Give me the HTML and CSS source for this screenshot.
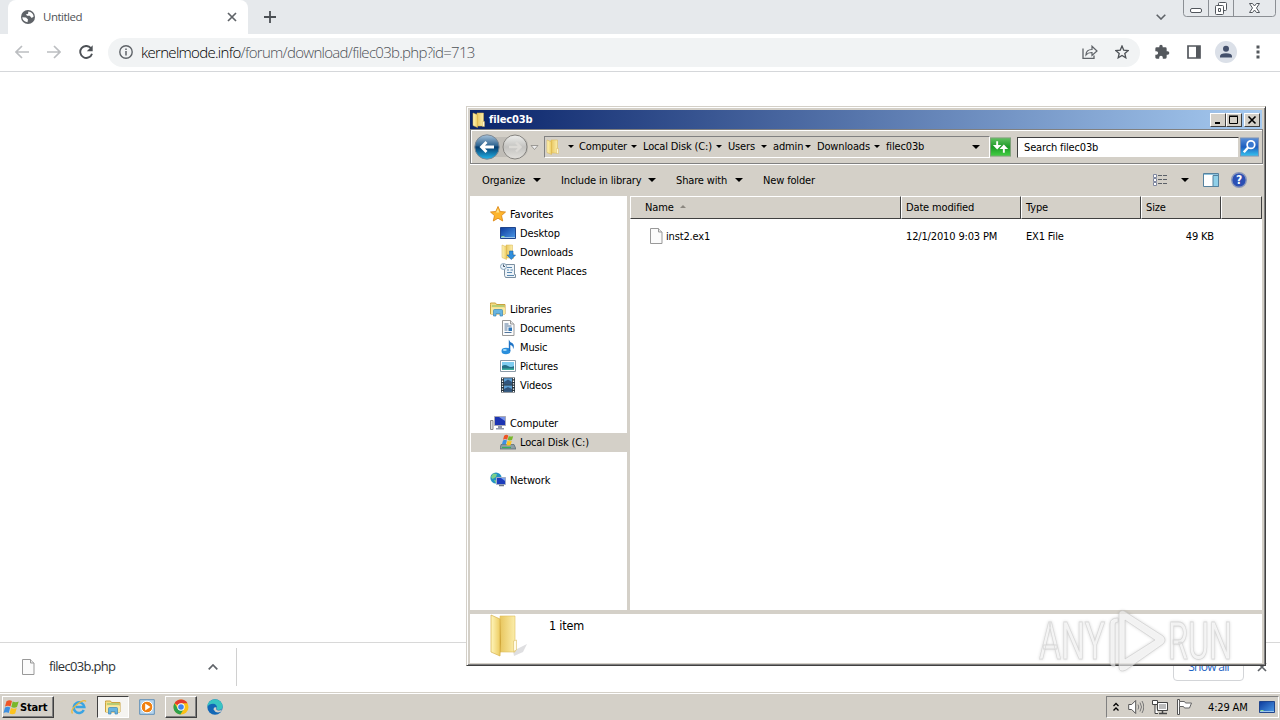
FILE: index.html
```html
<!DOCTYPE html>
<html lang="en">
<head>
  <meta charset="UTF-8">
  <title>Untitled</title>
  <link rel="stylesheet" href="styles.css">
</head>
<body>
  <svg class="defs" width="0" height="0">
    <defs>
      <linearGradient id="gold" x1="0" x2="1"><stop offset="0" stop-color="#fff6bc"/><stop offset="1" stop-color="#edcc62"/></linearGradient>
      <linearGradient id="gold2" x1="0" x2="1"><stop offset="0" stop-color="#e8c65e"/><stop offset="1" stop-color="#fbedaa"/></linearGradient>
      <linearGradient id="blue" x1="0" x2="1" y2="1"><stop offset="0" stop-color="#0c3a9c"/><stop offset="1" stop-color="#4d9be8"/></linearGradient>
      <linearGradient id="orb" x1="0" x2="0" y2="1"><stop offset="0" stop-color="#a9c4dc"/><stop offset=".45" stop-color="#2c628f"/><stop offset=".5" stop-color="#053b6d"/><stop offset="1" stop-color="#23b5ea"/></linearGradient>
      <linearGradient id="orbGray" x1="0" x2="0" y2="1"><stop offset="0" stop-color="#eeeeec"/><stop offset=".5" stop-color="#c4c3c0"/><stop offset="1" stop-color="#e2e0dc"/></linearGradient>
      <linearGradient id="green" x1="0" x2="0" y2="1"><stop offset="0" stop-color="#62c262"/><stop offset=".5" stop-color="#1d9a27"/><stop offset="1" stop-color="#43d043"/></linearGradient>
      <linearGradient id="look" x1="0" x2="0" y2="1"><stop offset="0" stop-color="#5a8fd8"/><stop offset=".5" stop-color="#1e5fc0"/><stop offset="1" stop-color="#35c5f0"/></linearGradient>
      <symbol id="folder" viewBox="0 0 16 16">
        <path d="M6 1h6.500v13H6z" fill="url(#gold2)" stroke="#d9b54e" stroke-width=".5"/>
        <path d="M2 1l4.500 1.800V15.500L2 13.500z" fill="url(#gold)" stroke="#d8b049" stroke-width=".5"/>
        <path d="M11.500 9.500h2v5h-2z" fill="#fff7d2" stroke="#d8b049" stroke-width=".4"/>
      </symbol>
      <symbol id="library" viewBox="0 0 16 16">
        <path d="M.5 3.500V2h5l1 1.500h8.500V13H.5z" fill="#f4dc82" stroke="#c9a23f"/>
        <path d="M2 5h12" stroke="#7bbd6a"/><path d="M1 6.500h14V13H1z" fill="#fae9a0"/>
        <path d="M3.500 15V9.500q0-1 1-1h7q1 0 1 1V15h-2.500v-2.500h-4V15z" fill="#67b4e0" stroke="#3b86b8" stroke-width=".7"/>
      </symbol>
      <symbol id="flag" viewBox="0 0 16 16">
        <path d="M3.500 2.200q3-2 5.500-.2L7.500 7.500q-2.500-1.500-5.500 0z" fill="#ee5526"/>
        <path d="M9.700 2.500q3 1.500 6 0L14 8q-3 1.300-5.700 0z" fill="#79b72b"/>
        <path d="M2 8.500q3-1.500 5.200 0l-1.500 5.500q-2.500-1.500-5.200 0z" fill="#3d8fe0"/>
        <path d="M8 9q3 1.500 5.700 0l-1.500 5.500q-2.700 1.500-5.700 0z" fill="#fcc31e"/>
      </symbol>
      <symbol id="desk" viewBox="0 0 16 16">
        <path d="M.5 2.500h15v11H.5z" fill="url(#blue)" stroke="#20458c"/><path d="M1 12.500h14" stroke="#9dc7ed"/><path d="M1.500 11.500h3" stroke="#8cdc8c"/>
      </symbol>
      <symbol id="page" viewBox="0 0 16 16">
        <path d="M2.500.5h8l3.500 3.500v11.500H2.500z" fill="#fbfbfb" stroke="#999"/><path d="M10.500.5V4H14" fill="#e7e7e7" stroke="#999"/>
      </symbol>
    </defs>
  </svg>

  <div class="browser">
    <div class="tabstrip">
      <div class="tab">
        <svg class="globe" viewBox="0 0 16 16"><circle cx="8" cy="8" r="7" fill="#5f6368"/><path d="M2.300 8.200l3.700.3 2 2-.5 2.800-1.700-.5Q2.500 11.500 2.300 8.200zM8.300 2.400q4.500.6 5.400 5l-2 1.500-2-2.200-2.500.1-1.400-1.400 2.300-.7z" fill="#fff"/></svg>
        <span class="tab-title">Untitled</span>
        <svg class="tab-close" viewBox="0 0 10 10"><path d="M1 1l8 8M9 1l-8 8" stroke="#5f6368" stroke-width="1.700"/></svg>
      </div>
      <svg class="tab-new" viewBox="0 0 12 12"><path d="M6 0v12M0 6h12" stroke="#4b4f54" stroke-width="1.800"/></svg>
      <svg class="tab-search" viewBox="0 0 10 6"><path d="M.7.7L5 5 9.300.7" fill="none" stroke="#5f6368" stroke-width="1.600"/></svg>
      <svg class="caption" viewBox="0 0 94 17">
        <path d="M.5 0v13.500q0 3 3 3h86q3 0 3-3V0M25.500 0v16M50.500 0v16" fill="none" stroke="#8b8f94"/>
        <g fill="#fff" stroke="#51565c"><rect x="7.500" y="8.500" width="11" height="4" rx="1.500"/><rect x="35.500" y="2.500" width="8" height="8" rx="1"/><rect x="32.500" y="5.500" width="8" height="9" rx="1"/><path d="M35.500 8.500h2v3h-2z"/></g>
        <path d="M66.500 3.500h3l2 2.500 2-2.500h3L73.500 8l3 4.500h-3l-2-2.500-2 2.500h-3l3-4.500z" fill="#fff" stroke="#51565c"/>
      </svg>
    </div>
    <div class="toolbar">
      <svg class="tool back" viewBox="0 0 14 14"><path d="M14 7H1.500M7 1L1 7l6 6" fill="none" stroke="#bcbec1" stroke-width="1.700"/></svg>
      <svg class="tool forward" viewBox="0 0 14 14"><path d="M0 7h12.500M7 1l6 6-6 6" fill="none" stroke="#bcbec1" stroke-width="1.700"/></svg>
      <svg class="tool reload" viewBox="0 0 14 14"><path d="M11.800 3A6 6 0 1 0 13 8.700" fill="none" stroke="#4d5156" stroke-width="1.900"/><path d="M13.700.3v6H7.800z" fill="#4d5156"/></svg>
      <div class="omnibox">
        <svg class="info" viewBox="0 0 14 14"><circle cx="7" cy="7" r="6.200" fill="none" stroke="#5f6368" stroke-width="1.400"/><path d="M7 6v4.500M7 3.400V5" stroke="#5f6368" stroke-width="1.500"/></svg>
        <span class="url"><b>kernelmode.info</b>/forum/download/filec03b.php?id=713</span>
        <svg class="share" viewBox="0 0 16 14"><path d="M1 3.500v10h11v-3" fill="none" stroke="#5f6368" stroke-width="1.300"/><path d="M4 10q0-5.500 6-5.500V1.200L15 6l-5 4.500V7.500Q6 7.300 4 10z" fill="none" stroke="#5f6368" stroke-width="1.200"/></svg>
        <svg class="star" viewBox="0 0 14 14"><path d="M7 1l1.700 4.100 4.500.4-3.400 2.900 1 4.400L7 10.500l-3.800 2.300 1-4.400L.8 5.500l4.500-.4z" fill="none" stroke="#4d5156" stroke-width="1.300"/></svg>
      </div>
      <svg class="puzzle" viewBox="0 0 24 24"><path d="M20.500 11H19V7a2 2 0 0 0-2-2h-4V3.500a2.500 2.500 0 0 0-5 0V5H4a2 2 0 0 0-2 2v3.800h1.500a2.700 2.700 0 0 1 0 5.400H2V20c0 1.100.9 2 2 2h3.800v-1.500a2.700 2.700 0 0 1 5.400 0V22H17a2 2 0 0 0 2-2v-4h1.500a2.500 2.500 0 0 0 0-5z" fill="#54585d"/></svg>
      <svg class="panel" viewBox="0 0 14 14"><path d="M1 1h12v12H1z" fill="#fff" stroke="#54585d" stroke-width="1.700"/><path d="M9 1h4v12H9z" fill="#54585d"/></svg>
      <svg class="avatar" viewBox="0 0 22 22"><circle cx="11" cy="11" r="11" fill="#dbe0e8"/><circle cx="11" cy="7.700" r="3" fill="#44506b"/><path d="M5 16.500v-1.300q0-3 6-3t6 3v1.300z" fill="#44506b"/></svg>
      <svg class="more" viewBox="0 0 4 14"><path d="M.5.500h3v3h-3zM.5 5.500h3v3h-3zM.5 10.500h3v3h-3z" fill="#54585d"/></svg>
    </div>
    <div class="page"></div>
    <div class="shelf">
      <div class="download">
        <svg viewBox="0 0 16 16"><use href="#page"/></svg>
        <span>filec03b.php</span>
        <svg class="chev" viewBox="0 0 10 6"><path d="M.7 5.300L5 1l4.300 4.300" fill="none" stroke="#5f6368" stroke-width="1.700"/></svg>
      </div>
      <div class="show-all">Show all</div>
      <svg class="shelf-close" viewBox="0 0 10 10"><path d="M1 1l8 8M9 1l-8 8" stroke="#5f6368" stroke-width="1.700"/></svg>
    </div>
  </div>

  <div class="window">
    <div class="titlebar">
      <svg class="ico" viewBox="0 0 16 16"><use href="#folder"/></svg>
      <span class="title">filec03b</span>
      <div class="btns">
        <i><svg viewBox="0 0 12 10"><path d="M3 8h5" stroke="#000" stroke-width="2"/></svg></i>
        <i><svg viewBox="0 0 12 10"><path d="M1.500 1.500h8v7h-8zM1 1h9" fill="none" stroke="#000"/></svg></i>
        <i class="x"><svg viewBox="0 0 12 10"><path d="M2.500 1.500l7 7M9.500 1.500l-7 7" stroke="#000" stroke-width="1.600"/></svg></i>
      </div>
    </div>

    <div class="nav">
      <svg class="orbs" viewBox="0 0 66 30">
        <rect x="8" y="5" width="46" height="20" rx="8" fill="#c0bdb7"/>
        <circle cx="13" cy="15" r="12.200" fill="url(#orb)" stroke="#7d8791"/><path d="M20 15H8M12.500 10l-5 5 5 5" fill="none" stroke="#fff" stroke-width="2.800"/>
        <circle cx="41" cy="15" r="12" fill="url(#orbGray)" stroke="#85837f"/><path d="M35 15h11M42 10.500l4.500 4.500-4.500 4.500" fill="none" stroke="#dcdad6" stroke-width="2.400"/>
        <path d="M57 13.500h7l-3.500 4z" fill="#eee" stroke="#8a8884" stroke-width=".8"/>
      </svg>
      <div class="address">
        <svg class="ico" viewBox="0 0 16 16"><use href="#folder"/></svg>
        <span class="arr"></span><span>Computer</span>
        <span class="arr"></span><span>Local Disk (C:)</span>
        <span class="arr"></span><span>Users</span>
        <span class="arr"></span><span>admin</span>
        <span class="arr"></span><span>Downloads</span>
        <span class="arr"></span><span>filec03b</span>
        <span class="arr big"></span>
      </div>
      <svg class="refresh" viewBox="0 0 22 20"><rect x=".5" y=".5" width="21" height="19" fill="url(#green)" stroke="#7f9f7a"/><path d="M7.500 4v5.500M14.500 16v-5.500" stroke="#fff" stroke-width="2"/><path d="M3 8h9l-4.500 4.500zM10 12h9l-4.500-4.500z" fill="#fff"/></svg>
      <div class="search">Search filec03b</div>
      <svg class="go" viewBox="0 0 20 20"><rect x=".5" y=".5" width="19" height="19" fill="url(#look)" stroke="#7d92b5"/><circle cx="11.500" cy="7.500" r="4" fill="#3978d0" stroke="#fff" stroke-width="1.800"/><path d="M8.500 10.500L4 15.500" stroke="#fff" stroke-width="2.600"/></svg>
    </div>

    <div class="commands">
      <span class="c1">Organize<span class="arr big"></span></span>
      <span class="c2">Include in library<span class="arr big"></span></span>
      <span class="c3">Share with<span class="arr big"></span></span>
      <span class="c4">New folder</span>
      <svg class="views" viewBox="0 0 16 14"><path d="M.5 1.500h3v3h-3zM.5 5.500h3v3h-3zM.5 9.500h3v3h-3z" fill="#fff" stroke="#8088a0"/><path d="M5 2.500h10M5 6.500h10M5 10.500h10" stroke="#5b6068" stroke-dasharray="4 1"/></svg>
      <span class="arr big"></span>
      <svg class="preview" viewBox="0 0 16 14"><path d="M.5.500h15v13H.5z" fill="#fff" stroke="#55819e"/><path d="M1 1.500h14" stroke="#8fc3de"/><path d="M10 2.500h5.500v11H10z" fill="#8fcfe8" stroke="#55819e"/></svg>
      <svg class="help" viewBox="0 0 16 16"><circle cx="8" cy="8" r="7.300" fill="#2b4fb4" stroke="#8b98bb" stroke-width="1.400"/><text x="8" y="12.300" text-anchor="middle">?</text></svg>
    </div>

    <div class="body">
      <div class="tree">
        <div class="item"><svg viewBox="0 0 16 16"><path d="M8 .5l2.200 5 5.300.5-4 3.600 1.200 5.400L8 12.200 3.300 15l1.200-5.400L.5 6l5.300-.5z" fill="#fdb52c" stroke="#de8a1b" stroke-width=".9"/><path d="M8 2.500l1.300 4H6z" fill="#ffe38a"/></svg>Favorites</div>
        <div class="item sub"><svg viewBox="0 0 16 16"><use href="#desk"/></svg>Desktop</div>
        <div class="item sub"><svg viewBox="0 0 16 16"><use href="#folder"/><path d="M9.500 7h3.500v4h2.500l-4.200 4.500L7 11h2.500z" fill="#2f8fdd" stroke="#1b62a8" stroke-width=".6"/></svg>Downloads</div>
        <div class="item sub"><svg viewBox="0 0 16 16"><path d="M4.500 1.500h10v10h1v3h-10l-1-2z" fill="#edf3f8" stroke="#7b8fa0"/><path d="M7 4.500h5M7 7h2M10.500 7H13M7 9.500h5M7 12.500h7" stroke="#5a88b0"/><circle cx="3.500" cy="3.500" r="3" fill="#e8f2fb" stroke="#8aa4bb"/><path d="M3.500 1.500v2H5" fill="none" stroke="#456"/></svg>Recent Places</div>
        <div class="item gap"></div>
        <div class="item"><svg viewBox="0 0 16 16"><use href="#library"/></svg>Libraries</div>
        <div class="item sub"><svg viewBox="0 0 16 16"><use href="#page"/><path d="M4.500 4h4M4.500 6h7M4.500 8h3M4.500 10h3M4.500 12.500h7" stroke="#54779c"/><path d="M8.500 7.500h3.500v3.500H8.500z" fill="#2d75b8"/></svg>Documents</div>
        <div class="item sub"><svg viewBox="0 0 16 16"><ellipse cx="6" cy="12" rx="4.500" ry="3.300" fill="#2a8fdc"/><path d="M8.800 12V.5Q9.500 3 12.500 4.200q2.500 2.300.5 6 .3-3.700-2.700-4.200V12z" fill="#1f74c6"/><ellipse cx="4.800" cy="11" rx="2" ry="1" fill="#a5dbfa"/></svg>Music</div>
        <div class="item sub"><svg viewBox="0 0 16 16"><path d="M.5 2.500h15v11H.5z" fill="#fff" stroke="#8b9aa7"/><path d="M2 4h12v8H2z" fill="#7fcdf0"/><path d="M2 8q3-2 6 0t6 0v4H2z" fill="#246f86"/><path d="M2 10.500h12V12H2z" fill="#3dae9d"/></svg>Pictures</div>
        <div class="item sub"><svg viewBox="0 0 16 16"><path d="M1 .5h14v15H1z" fill="#26333d"/><path d="M4 1.200h8v6H4zM4 8.500h8v6H4z" fill="#5e9fd3"/><path d="M4 5l4-2.500L12 5v2.200H4zM4 12l4-2 4 2v2.500H4z" fill="#31557c"/><path d="M2.500 1v14M13.500 1v14" stroke="#fff" stroke-width="1.300" stroke-dasharray="1.300 1.300"/></svg>Videos</div>
        <div class="item gap"></div>
        <div class="item"><svg viewBox="0 0 16 16"><path d="M4.500 1.500h11v9h-11z" fill="#1c34b2" stroke="#a9a9b5"/><path d="M9 2h6v4z" fill="#7693ea"/><path d="M8 11h4v2H8zM6 13h8v1.500H6z" fill="#8f96a8"/><path d="M.5 5.500h2.500v9H.5z" fill="#ddd" stroke="#888"/></svg>Computer</div>
        <div class="item sub selected"><svg viewBox="0 0 16 16"><path d="M1 10.500h13l2 4.500H0z" fill="#8d9da5" stroke="#53666e" stroke-width=".7"/><path d="M2 13.500h9" stroke="#38b05a" stroke-width="1.300"/><use href="#flag" x="1.500" y="0" width="12" height="12"/></svg>Local Disk (C:)</div>
        <div class="item gap"></div>
        <div class="item"><svg viewBox="0 0 16 16"><circle cx="6" cy="6" r="5.600" fill="#2291c4"/><path d="M3 1.500l4 .5-1 3-3.500 2L1 5zM4 8l3 .5-1 3z" fill="#7bd089"/><path d="M6.500 5.500h9v7h-9z" fill="#1c3dbd" stroke="#a3aec6"/><path d="M11 6h4v3z" fill="#7aa4f2"/><path d="M9 13.500h5" stroke="#6d7689" stroke-width="1.500"/></svg>Network</div>
      </div>
      <div class="list">
        <div class="head">
          <span class="name">Name<i class="sort"></i></span><span>Date modified</span><span>Type</span><span class="size">Size</span><span class="rest"></span>
        </div>
        <div class="row">
          <span class="name"><svg viewBox="0 0 16 16"><use href="#page"/></svg>inst2.ex1</span><span>12/1/2010 9:03 PM</span><span>EX1 File</span><span class="size">49 KB</span>
        </div>
      </div>
    </div>

    <div class="details">
      <svg viewBox="0 0 40 44">
        <path d="M24 37l14-7-4 8-9 4z" fill="#c9c9cd" opacity=".6"/>
        <path d="M11 2h15v36H11z" fill="url(#gold2)" stroke="#dfc060" stroke-width=".6"/>
        <path d="M2 1l9 4v37L2 38z" fill="url(#gold)" stroke="#d5b04c" stroke-width=".7"/>
        <path d="M11 5l1 23-1 14z" fill="#cfa63a"/>
        <path d="M24.500 27l3-1v10l-3 1.500z" fill="#fffbe6" stroke="#dcbd63" stroke-width=".6"/>
      </svg>
      <span>1 item</span>
    </div>
  </div>

  <svg class="watermark" viewBox="0 0 200 66">
    <g class="wm-text">
      <text x="3" y="51" textLength="66" lengthAdjust="spacingAndGlyphs">ANY</text>
      <text x="132" y="51" textLength="64" lengthAdjust="spacingAndGlyphs">RUN</text>
    </g>
    <path d="M82 10q-8 0-8 6v37q0 6 5 5V16q0-2 3-2zM88 3l39 25q4 4 0 8L90 62q-7 3-7-3V6q1-4 5-3zM89 12v39l30-19z"/>
  </svg>

  <div class="taskbar">
    <div class="start"><svg viewBox="0 0 16 16"><use href="#flag"/></svg>Start</div>
    <div class="task"><svg viewBox="0 0 16 16"><path d="M12.800 11A5.300 5.300 0 1 1 13.300 8H4.500" fill="none" stroke="#3aa4e3" stroke-width="2.500"/><path d="M1.500 14.500Q-1 11 6 5.500T15 2.500" fill="none" stroke="#efb93a" stroke-width="1.300"/></svg></div>
    <div class="task pressed"><svg viewBox="0 0 16 16"><use href="#library"/></svg></div>
    <div class="task"><svg viewBox="0 0 16 16"><path d="M.7.700h14.600v14.600H.7z" fill="#b8d6ee" stroke="#5f8fb8"/><circle cx="8" cy="8" r="5.800" fill="#f08010" stroke="#fff"/><path d="M6.200 4.500L11.500 8l-5.300 3.500z" fill="#fff"/></svg></div>
    <div class="task raised"><svg viewBox="0 0 16 16"><circle cx="8" cy="8" r="7.500" fill="#fbc116"/><path d="M8 8L1.500 4.200A7.500 7.500 0 0 1 14.500 4.200H8z" fill="#e33b2e"/><path d="M1.500 4.200A7.500 7.500 0 0 0 7.300 15.500L11 9.700 5 10z" fill="#2da14c"/><circle cx="8" cy="8" r="3.700" fill="#fff"/><circle cx="8" cy="8" r="2.800" fill="#4083ee"/></svg></div>
    <div class="task"><svg viewBox="0 0 16 16"><circle cx="8" cy="8" r="7.700" fill="#1267b6"/><path d="M.4 8A7.600 7.600 0 0 1 15.600 7.500Q15.500 11 11.500 11 9 11 10 9 10 5 6 4.800 2 4.800.4 8z" fill="#38c4c2"/><path d="M9.500 8.500q-1 3 2 3 2 .2 4-1.500l-2 3q-5 1.500-7-2.500 0-3 3-2z" fill="#d4d0c8"/></svg></div>
    <div class="tray">
      <svg class="up" viewBox="0 0 8 10"><path d="M1.500 4L4 1.500 6.500 4M1.500 8.500L4 6l2.500 2.500" fill="none" stroke="#000" stroke-width="1.300"/></svg>
      <svg class="t1" viewBox="0 0 16 16"><path d="M.7 5.500h3l4-4v13l-4-4h-3z" fill="#fff" stroke="#555"/><path d="M10 5.500q1.500 2.500 0 5M12 3.500q3 4.500 0 9M14 2q3.500 6 0 12" fill="none" stroke="#777"/></svg>
      <svg class="t2" viewBox="0 0 16 16"><path d="M5.500 3.500h10v8h-10z" fill="#bbb" stroke="#444"/><path d="M6.500 4.500h8v6h-8z" fill="none" stroke="#fff"/><path d="M7 14.500h8M10.500 12v2" stroke="#444" stroke-width="1.500"/><path d="M.5 1.500h5v4h-5zM3 6v8.500h3" fill="#fff" stroke="#444"/></svg>
      <svg class="t3" viewBox="0 0 16 16"><path d="M1.500.5h2v15h-2z" fill="#fff" stroke="#555"/><path d="M3.500 2.500h5l1 1.500h6l-2 5h-5l-1-1.500h-4z" fill="#fff" stroke="#666"/></svg>
      <span>4:29 AM</span>
      <svg class="t4" viewBox="0 0 16 16"><use href="#desk"/></svg>
    </div>
  </div>
</body>
</html>
```
FILE: styles.css
```css
* {
  box-sizing: border-box;
}
html, body {
  margin: 0;
  height: 720px;
  overflow: hidden;
  background: #fff;
  color: #000;
  font-family: "DejaVu Sans Condensed", "DejaVu Sans", sans-serif;
  font-size: 11px;
  letter-spacing: -0.15px;
  white-space: nowrap;
}
body {
  display: flex;
  flex-direction: column;
}
svg {
  display: block;
  flex: none;
}
.defs {
  position: absolute;
}

/* browser */
.browser {
  flex: 1;
  display: flex;
  flex-direction: column;
}
.tabstrip {
  height: 34px;
  display: flex;
  align-items: center;
  padding-left: 8px;
  background: #e6e9ec;
}
.tab {
  width: 240px;
  height: 34px;
  display: flex;
  align-items: center;
  padding: 0 11px 0 12px;
  background: #fff;
  border-radius: 8px 8px 0 0;
}
.globe {
  width: 16px;
  height: 16px;
}
.tab-title {
  flex: 1;
  margin-left: 7px;
  padding-bottom: 1px;
  font-family: "Open Sans", sans-serif;
  font-size: 11.5px;
  letter-spacing: -0.5px;
  color: #505357;
}
.tab-close {
  width: 10px;
  height: 10px;
}
.tab-new {
  width: 12px;
  height: 12px;
  margin-left: 16px;
}
.tab-search {
  width: 10px;
  height: 6px;
  margin-left: auto;
}
.caption {
  width: 94px;
  height: 17px;
  margin: 0 3px 0 17px;
  align-self: flex-start;
}
.toolbar {
  height: 38px;
  display: flex;
  align-items: center;
  padding: 0 20px 1px 15px;
  border-bottom: 1px solid #d5d7da;
}
.tool {
  width: 14px;
  height: 14px;
  margin-right: 18px;
}
.reload {
  margin-right: 15px;
}
.omnibox {
  width: 1032px;
  height: 29px;
  display: flex;
  align-items: center;
  padding: 0 11px;
  border-radius: 15px;
  background: #f1f3f4;
}
.info {
  width: 14px;
  height: 14px;
}
.url {
  flex: 1;
  margin-left: 8px;
  font-family: "Open Sans", sans-serif;
  font-size: 15px;
  font-weight: 300;
  letter-spacing: -0.71px;
  color: #4d5156;
}
.url b {
  font-weight: 300;
  color: #000;
}
.share {
  width: 16px;
  height: 14px;
}
.star {
  width: 14px;
  height: 14px;
  margin-left: 17px;
}
.puzzle {
  width: 16px;
  height: 16px;
  margin-left: 14px;
}
.panel {
  width: 14px;
  height: 14px;
  margin-left: 17px;
}
.avatar {
  width: 22px;
  height: 22px;
  margin-left: 14px;
}
.more {
  width: 4px;
  height: 14px;
  margin-left: 19px;
}
.page {
  flex: 1;
}
.shelf {
  height: 50px;
  display: flex;
  align-items: center;
  padding: 0 13px 2px 0;
  border-top: 1px solid #d8d8d8;
}
.download {
  width: 237px;
  height: 38px;
  display: flex;
  align-items: center;
  padding: 0 18px 0 20px;
  border-right: 1px solid #d0d0d0;
  color: #303336;
  font-family: "Open Sans", sans-serif;
  font-size: 13px;
  letter-spacing: -0.7px;
}
.download svg {
  width: 16px;
  height: 16px;
}
.download span {
  flex: 1;
  margin-left: 13px;
  padding-bottom: 1px;
}
.download .chev {
  width: 10px;
  height: 6px;
}
.show-all {
  width: 71px;
  height: 28px;
  margin-left: auto;
  border: 1px solid #d3d5d8;
  border-radius: 4px;
  color: #1f63c4;
  font-family: "Open Sans", sans-serif;
  font-size: 12px;
  line-height: 25px;
  text-align: center;
  letter-spacing: -0.7px;
}
.shelf-close {
  width: 10px;
  height: 10px;
  margin-left: 13px;
}

/* explorer window */
.window {
  position: absolute;
  left: 466px;
  top: 106px;
  width: 800px;
  height: 560px;
  display: flex;
  flex-direction: column;
  padding: 2px;
  background: #d4d0c8;
  border: 1px solid;
  border-color: #d4d0c8 #404040 #404040 #d4d0c8;
  box-shadow: inset 1px 1px #fff, inset -1px -1px #808080;
}
.ico {
  width: 16px;
  height: 16px;
}
.titlebar {
  height: 19px;
  display: flex;
  align-items: center;
  margin: 1px 1px 0;
  padding: 0 2px 0 1px;
  background: linear-gradient(90deg, #0a246a, #a6caf0);
}
.title {
  flex: 1;
  margin-left: 2px;
  padding-bottom: 1px;
  color: #fff;
  font-weight: bold;
}
.btns {
  display: flex;
}
.btns i {
  width: 16px;
  height: 14px;
  padding: 1px;
  background: #d4d0c8;
  border: 1px solid;
  border-color: #fff #404040 #404040 #fff;
}
.btns .x {
  margin-left: 2px;
}
.btns svg {
  width: 12px;
  height: 10px;
}
.nav {
  height: 35px;
  display: flex;
  align-items: center;
  margin-left: 1px;
  padding: 1px 2px 0 3px;
  border: 1px solid #808080;
  box-shadow: inset 1px 1px #fff, 0 1px #fff;
}
.orbs {
  width: 66px;
  height: 30px;
}
.address {
  width: 446px;
  height: 22px;
  margin: 0 0 1px 4px;
  display: grid;
  grid-template-columns: 19px 15px 48px 16px 69px 16px 29px 16px 28px 16px 53px 16px 38px 1fr;
  align-items: center;
  border: 1px solid;
  border-color: #808080 #fff #fff #808080;
}
.arr::before {
  content: "";
  display: block;
  width: 0;
  margin: 0 0 0 4px;
  border: 3px solid transparent;
  border-top-color: #000;
  border-bottom: 0;
}
.arr.big::before {
  border-width: 4px 4px 0;
  margin: 0;
}
.address .big {
  justify-self: end;
  margin-right: 9px;
}
.refresh {
  width: 21px;
  height: 20px;
}
.search {
  width: 222px;
  height: 21px;
  margin-left: 6px;
  padding-left: 6px;
  background: #fff;
  border: 1px solid;
  border-color: #404040 #d4d0c8 #d4d0c8 #404040;
  line-height: 19px;
}
.go {
  width: 19px;
  height: 20px;
  margin-left: 1px;
}
.commands {
  height: 32px;
  display: flex;
  align-items: center;
  padding: 0 16px 0 13px;
}
.commands > span {
  display: flex;
  align-items: center;
}
.commands .c1 {
  width: 79px;
}
.commands .c2 {
  width: 115px;
}
.commands .c3 {
  width: 87px;
}
.commands span .arr {
  margin: 0 20px 0 auto;
}
.commands .views {
  width: 16px;
  height: 14px;
  margin-left: auto;
}
.commands > .arr {
  margin: 0 14px 0 12px;
}
.commands .preview {
  width: 16px;
  height: 14px;
}
.commands .help {
  width: 16px;
  height: 16px;
  margin-left: 12px;
}
.help text {
  fill: #fff;
  font-size: 12px;
  font-weight: bold;
}
.body {
  flex: 1;
  display: flex;
  margin: 0 1px;
}
.tree {
  width: 157px;
  padding: 9px 0 0 1px;
  background: #fff;
}
.item {
  height: 19px;
  display: flex;
  align-items: center;
  padding-left: 19px;
  line-height: 21px;
}
.item.sub {
  padding-left: 29px;
}
.item.selected {
  background: #d4d0c8;
}
.item svg {
  width: 16px;
  height: 16px;
  margin: 0 4px 1px 0;
}
.list {
  flex: 1;
  margin-left: 3px;
  background: #fff;
}
.head, .row {
  display: grid;
  grid-template-columns: 271px 120px 120px 80px 1fr;
}
.head {
  height: 23px;
}
.head span {
  padding-left: 4px;
  background: #d4d0c8;
  border: 1px solid;
  border-color: #fff #404040 #404040 #fff;
  line-height: 21px;
}
.head .name {
  display: flex;
  align-items: center;
  padding-left: 14px;
}
.sort {
  margin: 0 0 2px 6px;
  border: 3px solid transparent;
  border-top: 0;
  border-bottom-color: #8b8780;
}
.row {
  height: 18px;
  margin-top: 8px;
  line-height: 19px;
}
.row span {
  padding-left: 5px;
}
.row .name {
  display: flex;
  align-items: center;
  padding-left: 18px;
}
.row .name svg {
  width: 16px;
  height: 16px;
  margin: 0 2px 2px 0;
}
.row .size {
  padding-right: 7px;
  text-align: right;
}
.details {
  height: 49px;
  display: flex;
  align-items: flex-start;
  margin: 4px 1px 0;
  padding-left: 19px;
  background: #fff;
}
.details svg {
  width: 40px;
  height: 44px;
}
.details span {
  margin: 4px 0 0 20px;
  font-size: 12.5px;
  letter-spacing: -0.2px;
}

/* watermark over the lower right corner */
.watermark {
  position: absolute;
  left: 1036px;
  top: 608px;
  width: 200px;
  height: 66px;
  fill: #fff;
  fill-opacity: .6;
  fill-rule: evenodd;
  stroke: #c8c8c8;
  stroke-width: 1px;
  stroke-opacity: .6;
  filter: drop-shadow(0 0 1.5px rgba(0, 0, 0, .22));
}
.wm-text {
  font-family: Roboto, sans-serif;
  font-size: 51px;
  letter-spacing: 0;
}

/* taskbar */
.taskbar {
  height: 28px;
  display: flex;
  align-items: center;
  padding: 1px 1px 0 2px;
  background: #d4d0c8;
  border-top: 1px solid #d4d0c8;
  box-shadow: inset 0 1px #fff;
}
.start {
  width: 52px;
  height: 22px;
  display: flex;
  align-items: center;
  margin-right: 9px;
  border: 1px solid;
  border-color: #fff #404040 #404040 #fff;
  box-shadow: inset -1px -1px #808080;
  font-weight: bold;
}
.start svg {
  width: 16px;
  height: 16px;
  margin: 0 1px 0 0;
}
.task {
  width: 32px;
  height: 22px;
  display: flex;
  align-items: center;
  justify-content: center;
  margin-right: 2px;
}
.task svg {
  width: 16px;
  height: 16px;
}
.pressed {
  background: #f5f4f1;
  border: 1px solid;
  border-color: #404040 #fff #fff #404040;
}
.raised {
  border: 1px solid;
  border-color: #fff #404040 #404040 #fff;
  box-shadow: inset -1px -1px #808080;
}
.tray {
  width: 173px;
  height: 22px;
  display: flex;
  align-items: center;
  margin-left: auto;
  padding-left: 5px;
  border: 1px solid;
  border-color: #808080 #fff #fff #808080;
}
.tray svg {
  width: 16px;
  height: 16px;
  margin-right: 8px;
}
.tray .up {
  width: 8px;
  height: 10px;
}
.tray span {
  width: 42px;
  margin-left: 8px;
}
.tray .t4 {
  margin: 0 0 0 9px;
}
```
